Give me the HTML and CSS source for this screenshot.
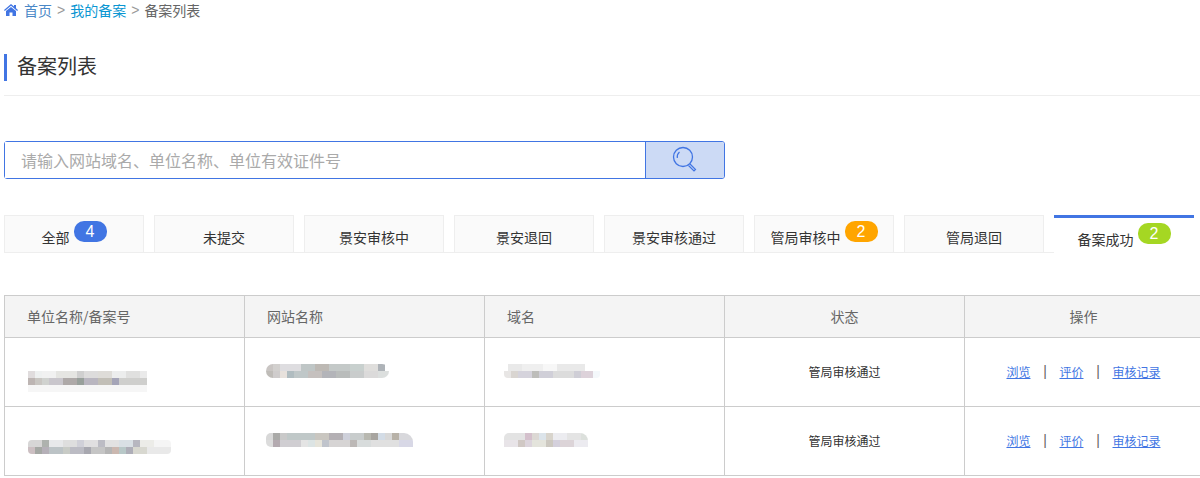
FILE: index.html
```html
<!DOCTYPE html>
<html lang="zh-CN">
<head>
<meta charset="utf-8">
<title>备案列表</title>
<link rel="stylesheet" href="styles.css">
</head>
<body>
<div class="page">
  <nav class="crumbs">
    <svg class="home" viewBox="0 0 14 12" width="14" height="12"><path d="M7 0 L10 2.6 V1 H12 V4.3 L14 6 L13.2 6.9 L7 1.7 L.8 6.9 L0 6 Z M2 7 L7 2.9 L12 7 V12 H8.5 V8.5 H5.5 V12 H2 Z" fill="#4175e3"/></svg>
    <a class="crumb-home">首页</a><span class="crumb-sep">&gt;</span><a class="crumb-link">我的备案</a><span class="crumb-sep">&gt;</span><span class="crumb-now">备案列表</span>
  </nav>
  <h1 class="title">备案列表</h1>
  <form class="search">
    <input class="search-input" type="text" placeholder="请输入网站域名、单位名称、单位有效证件号">
    <button class="search-btn" type="button" aria-label="搜索">
      <svg viewBox="0 0 26 28" width="26" height="28" fill="none" stroke="#4175e3"><circle cx="11" cy="11" r="9.5" stroke-width="1.3"/><path d="M5.3 12 A6.5 6.5 0 0 1 7.5 6" stroke-width="1.2"/><path d="M18 18 L23.5 23.5 L22 25 L16.5 19.5" stroke-width="1.2"/></svg>
    </button>
  </form>
  <ul class="tabs">
    <li class="tab"><span>全部</span><b class="badge badge-blue">4</b></li>
    <li class="tab"><span>未提交</span></li>
    <li class="tab"><span>景安审核中</span></li>
    <li class="tab"><span>景安退回</span></li>
    <li class="tab"><span>景安审核通过</span></li>
    <li class="tab"><span>管局审核中</span><b class="badge badge-orange">2</b></li>
    <li class="tab"><span>管局退回</span></li>
    <li class="tab tab-active"><span>备案成功</span><b class="badge badge-green">2</b></li>
  </ul>
  <table class="list">
    <thead>
      <tr>
        <th>单位名称/备案号</th>
        <th>网站名称</th>
        <th>域名</th>
        <th class="center">状态</th>
        <th class="center last">操作</th>
      </tr>
    </thead>
    <tbody>
      <tr>
        <td><div class="mosaic m-a"></div></td>
        <td><div class="mosaic m-b"></div></td>
        <td><div class="mosaic m-c"></div></td>
        <td class="center">管局审核通过</td>
        <td class="center last"><div class="ops"><a>浏览</a><span class="ops-sep">|</span><a>评价</a><span class="ops-sep">|</span><a>审核记录</a></div></td>
      </tr>
      <tr>
        <td><div class="mosaic m-d"></div></td>
        <td><div class="mosaic m-e"></div></td>
        <td><div class="mosaic m-f"></div></td>
        <td class="center">管局审核通过</td>
        <td class="center last"><div class="ops"><a>浏览</a><span class="ops-sep">|</span><a>评价</a><span class="ops-sep">|</span><a>审核记录</a></div></td>
      </tr>
    </tbody>
  </table>
</div>
</body>
</html>
```
FILE: styles.css
```css
* { box-sizing: border-box; }
html, body { margin: 0; height: 478px; overflow: hidden; background: #fff; }
body { font-family: "Noto Sans CJK SC", "Liberation Sans", sans-serif; color: #333; }
.page { width: 1205px; padding-left: 4px; }

.crumbs { display: flex; align-items: center; height: 20px; font-size: 14px; line-height: 20px; }
.home { margin-right: 6px; margin-top: -1px; }
.crumb-home { color: #4a88c7; }
.crumb-link { color: #0a96d2; }
.crumb-sep { color: #999; margin: 0 5px; font-family: "Liberation Sans", sans-serif; }
.crumb-now { color: #666; }

.title { margin: 34px 0 0; height: 42px; padding: 0; border-bottom: 1px solid #eee; width: 1196px; font-size: 20px; font-weight: 400; line-height: 24px; color: #333; text-indent: 13px; background: linear-gradient(#4175e3, #4175e3) no-repeat 0 0 / 3px 27px; }

.search { display: flex; width: 721px; height: 38px; margin-top: 45px; border: 1px solid #4175e3; border-radius: 3px; }
.search-input { flex: 1; min-width: 0; border: 0; outline: 0; padding: 0 16px; font: 16px "Noto Sans CJK SC", sans-serif; color: #333; background: #fff; }
.search-input::placeholder { color: #aaa; opacity: 1; }
.search-btn { width: 79px; padding: 0; border: 0; border-left: 1px solid #4175e3; background: #ccdaf5; display: flex; align-items: center; justify-content: center; border-radius: 0 2px 2px 0; }

.tabs { display: flex; gap: 10px; list-style: none; margin: 36px 0 0; padding: 0; width: 1190px; height: 38px; background: linear-gradient(#eee, #eee) no-repeat 0 37px / 1050px 1px; }
.tab { width: 140px; height: 38px; display: flex; justify-content: center; align-items: flex-start; padding-top: 11px; border: 1px solid #eee; background: #fafafa; font-size: 14px; line-height: 20px; color: #333; }
.tab-active { border: 0; border-top: 3px solid #4175e3; background: #fff; padding-top: 11px; }
.badge { width: 33px; height: 21px; margin: -6px 0 0 4px; border-radius: 10px; color: #fff; font: 400 16px/21px "Liberation Sans", sans-serif; text-align: center; }
.badge-blue { background: #4175e3; }
.badge-orange { background: #ffa500; }
.badge-green { background: #a5d723; }

.list { width: 1201px; margin-top: 42px; border-collapse: collapse; table-layout: fixed; font-size: 12px; }
.list th, .list td { border: 1px solid #ccc; padding: 0; }
.list th { height: 42px; padding: 0 0 2px 22px; background: #f4f4f4; color: #666; font-size: 14px; font-weight: 400; text-align: left; }
.list td { height: 69px; color: #333; }
.list th.center, .list td.center { padding: 0 0 2px; text-align: center; }
.list th.last, .list td.last { padding-right: 2px; }

.ops { display: flex; justify-content: center; align-items: center; color: #666; }
.ops a { color: #4175e3; text-decoration: underline; }
.ops-sep { width: 29px; padding-left: 12.7px; text-align: left; font: 14px/18px "Liberation Sans", sans-serif; }

.mosaic { height: 14px; border-radius: 4px; background-repeat: no-repeat; background-size: 100% 7px; background-position: 0 0, 0 7px; }
.m-a { width: 119px; margin: 0 0 0 23px; position: relative; top: 6px; border-radius: 0; box-shadow: 0 7px 0 #f6f6f6;
  background-image:
    linear-gradient(90deg, #e0dcdd 0 7px, #eef0f0 0 14px, #f1f1f1 0 28px, #e5e5e2 0 49px, #cfcfcf 0 56px, #dddcdc 0 70px, #dedcd8 0 84px, #eceded 0 98px, #e0e0df 0 112px, #eaeaea 0 119px),
    linear-gradient(90deg, #bdb5b3 0 7px, #c9c6c2 0 14px, #d0d2cf 0 21px, #c9c6cc 0 35px, #aea9a8 0 49px, #98a09b 0 56px, #b9b6c0 0 70px, #c2bfb7 0 84px, #a5a5b8 0 91px, #cfcfcd 0 119px); }
.m-b { width: 123px; margin: 0 0 0 21px; position: relative; top: -1px; border-radius: 7px;
  background-image:
    linear-gradient(90deg, #c9c5c3 0 7px, #d2d0ce 0 14px, #dedde0 0 35px, #bfc6c6 0 49px, #bdb9b4 0 63px, #c4c9c8 0 84px, #c8d0ce 0 98px, #dfdedc 0 112px, #aeb3b8 0 119px, #fff 0 123px),
    linear-gradient(90deg, #bfbcb8 0 7px, #cfcccc 0 14px, #e7e1dc 0 21px, #b0bcc0 0 28px, #bfc7c8 0 42px, #c5c0be 0 56px, #b3b4b9 0 70px, #b9bcbb 0 84px, #c9cccc 0 98px, #dbdada 0 112px, #dcdfde 0 123px); }
.m-c { width: 96px; margin: 0 0 0 19px; position: relative; top: -1px;
  background-image:
    linear-gradient(90deg, #fff 0 4px, #e9e9e9 0 18px, #efefef 0 39px, #f7f7f7 0 53px, #e9e9e9 0 81px, #fff 0 96px),
    linear-gradient(90deg, #e8e6e5 0 7px, #d9d5d1 0 14px, #d5d3dc 0 28px, #bdbdba 0 35px, #d0cfd8 0 49px, #dcdcdc 0 70px, #cfced6 0 77px, #ddd2da 0 89px, #f4f8fb 0 96px); }
.m-d { width: 143px; margin: 0 0 0 23px; position: relative; top: 6px;
  background-image:
    linear-gradient(90deg, #d7d6d6 0 14px, #aeb2ae 0 21px, #e7e8ea 0 35px, #dedede 0 49px, #d0d0d8 0 56px, #e0dfe0 0 70px, #bcbcc4 0 77px, #e2e2e2 0 91px, #d9e0e5 0 105px, #b7b7c0 0 112px, #ecece8 0 126px, #f5f5f5 0 143px),
    linear-gradient(90deg, #ccbfc2 0 7px, #a5a8a4 0 14px, #b5b0b8 0 21px, #bcc3c6 0 35px, #c8cbc6 0 42px, #bcbcc4 0 56px, #a8a8b0 0 63px, #c5c5c5 0 77px, #b5b5b5 0 84px, #cbb8b0 0 91px, #b8c8c8 0 98px, #aeaeb8 0 105px, #d8d8d0 0 119px, #e9e9e9 0 143px); }
.m-e { width: 147px; margin: 0 0 0 21px; position: relative; top: -1px; border-radius: 5px 9px 0 5px;
  background-image:
    linear-gradient(90deg, #d8d8d8 0 7px, #aaaaa8 0 14px, #c9c9c9 0 21px, #c0c8c8 0 49px, #c9c6c0 0 63px, #b4b0b4 0 77px, #ced0da 0 84px, #c8cccc 0 98px, #b8b8b0 0 105px, #a8a5a0 0 112px, #d3dce6 0 119px, #d8d8d8 0 126px, #b8b2a8 0 133px, #d8d8dc 0 147px),
    linear-gradient(90deg, #dcdcdc 0 7px, #b4aab0 0 14px, #d0ced2 0 35px, #e4e4e4 0 42px, #dce4e4 0 49px, #e6e4da 0 56px, #c0c4cc 0 63px, #d6d4d4 0 84px, #bcb8b6 0 91px, #d8dcdc 0 105px, #e0e0e0 0 133px, #d8d8e6 0 147px); }
.m-f { width: 84px; margin: 0 0 0 19px; position: relative; top: -1px; border-radius: 5px 8px 0 0;
  background-image:
    linear-gradient(90deg, #e3e3e3 0 21px, #d4c0cc 0 28px, #dcd8d4 0 35px, #dce4ea 0 42px, #d8d4cc 0 49px, #ececf0 0 63px, #e4e4e4 0 77px, #dce0dc 0 84px),
    linear-gradient(90deg, #e8e4e8 0 14px, #d0c8c4 0 21px, #dcd4dc 0 28px, #e4e4dc 0 42px, #ccc8c0 0 49px, #d4d0dc 0 56px, #dcd4d8 0 70px, #ecebf0 0 84px); }
```
